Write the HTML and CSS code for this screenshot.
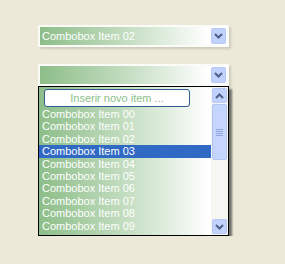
FILE: index.html
```html
<!DOCTYPE html>
<html>
<head>
<meta charset="utf-8">
<link rel="stylesheet" href="styles.css">
</head>
<body>
<div class="page">
  <div class="combo combo-first">
    <span class="combo-text">Combobox Item 02</span>
    <span class="btn"><svg width="9" height="6" viewBox="0 0 9 6"><path d="M1 1 L4.5 4.5 L8 1" fill="none" stroke="#4d6185" stroke-width="2"/></svg></span>
  </div>
  <div class="combo combo-second">
    <span class="combo-text"></span>
    <span class="btn"><svg width="9" height="6" viewBox="0 0 9 6"><path d="M1 1 L4.5 4.5 L8 1" fill="none" stroke="#4d6185" stroke-width="2"/></svg></span>
  </div>
  <div class="drop">
    <div class="list">
      <div class="newitem">Inserir novo item ...</div>
      <div class="items">
        <div class="item">Combobox Item 00</div>
        <div class="item">Combobox Item 01</div>
        <div class="item">Combobox Item 02</div>
        <div class="item sel">Combobox Item 03</div>
        <div class="item">Combobox Item 04</div>
        <div class="item">Combobox Item 05</div>
        <div class="item">Combobox Item 06</div>
        <div class="item">Combobox Item 07</div>
        <div class="item">Combobox Item 08</div>
        <div class="item">Combobox Item 09</div>
      </div>
    </div>
    <div class="sbar">
      <span class="sbtn"><svg width="9" height="6" viewBox="0 0 9 6"><path d="M1 5 L4.5 1.5 L8 5" fill="none" stroke="#4d6185" stroke-width="2"/></svg></span>
      <span class="thumb"><span class="grip"></span></span>
      <span class="track"></span>
      <span class="sbtn"><svg width="9" height="6" viewBox="0 0 9 6"><path d="M1 1 L4.5 4.5 L8 1" fill="none" stroke="#4d6185" stroke-width="2"/></svg></span>
    </div>
  </div>
</div>
</body>
</html>
```

FILE: styles.css
```css
html, body {
  margin: 0;
  padding: 0;
  background: #ece9d8;
}
.page {
  padding: 25px 0 0 38px;
  font-family: "Liberation Sans", Arial, sans-serif;
  font-size: 11px;
}
.combo {
  width: 187px;
  height: 18px;
  border: 2px solid #fbfbf8;
  background: linear-gradient(to right, #8dbe89 0%, #c2dcbf 45%, #ffffff 90%);
  display: flex;
  align-items: center;
  justify-content: space-between;
  box-shadow: 2px 2px 2px rgba(150, 150, 130, 0.35);
}
.combo-first {
  margin-bottom: 17px;
}
.combo-text {
  color: #ffffff;
  padding-left: 2px;
  line-height: 18px;
}
.btn {
  width: 15px;
  height: 16px;
  margin-right: 1px;
  background: #c1d2fc;
  border: 1px solid #b6c8f4;
  border-radius: 2px;
  box-sizing: border-box;
  display: flex;
  align-items: center;
  justify-content: center;
}
.drop {
  margin-top: 0;
  width: 189px;
  height: 148px;
  border: 1px solid #000000;
  background: linear-gradient(to right, #8dbe89 0%, #c2dcbf 45%, #ffffff 90%);
  display: flex;
  box-shadow: 3px 3px 2px rgba(60, 60, 60, 0.7);
}
.list {
  flex: 1;
  display: flex;
  flex-direction: column;
  padding-top: 2px;
}
.newitem {
  margin-left: 5px;
  width: 144px;
  height: 16px;
  background: #ffffff;
  border: 1px solid #2f5e8e;
  border-radius: 3px;
  color: #8dbe89;
  text-align: center;
  line-height: 16px;
  font-size: 11px;
}
.items {
  padding-top: 1px;
}
.item {
  color: #ffffff;
  line-height: 12.4px;
  height: 12.4px;
  padding-left: 3px;
}
.item.sel {
  background: #316ac5;
}
.sbar {
  width: 17px;
  background: #f6f6f2;
  display: flex;
  flex-direction: column;
  padding: 1px 0 1px 1px;
  box-sizing: border-box;
  gap: 1px;
}
.sbtn {
  width: 15px;
  height: 15px;
  background: #c1d2fc;
  border: 1px solid #b6c8f4;
  border-radius: 2px;
  box-sizing: border-box;
  display: flex;
  align-items: center;
  justify-content: center;
}
.thumb {
  width: 15px;
  height: 56px;
  background: #c6d5fc;
  border: 1px solid #b3c6f3;
  border-radius: 2px;
  box-sizing: border-box;
  display: flex;
  align-items: center;
  justify-content: center;
}
.grip {
  width: 7px;
  height: 7px;
  background: repeating-linear-gradient(to bottom, #8fa6e0 0 1px, transparent 1px 2px);
}
.track {
  flex: 1;
}
```
